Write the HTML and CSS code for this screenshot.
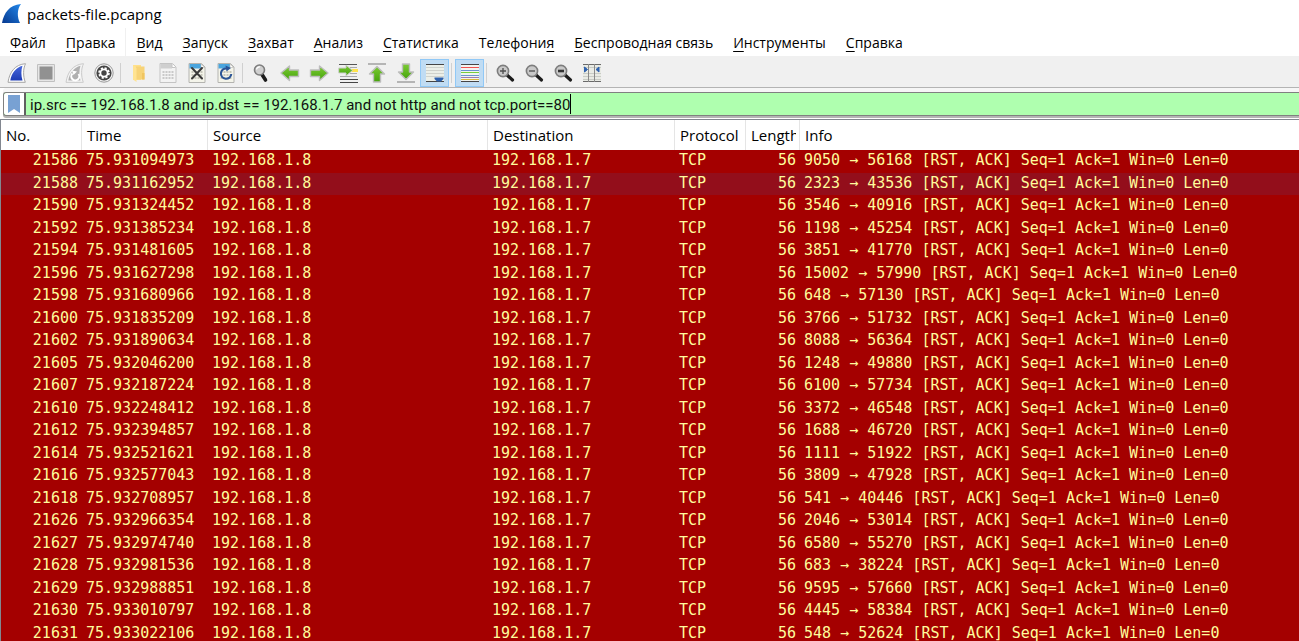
FILE: index.html
```
<!DOCTYPE html>
<html lang="ru">
<head>
<meta charset="utf-8">
<title>packets-file.pcapng</title>
<link rel="stylesheet" href="styles.css">
</head>
<body>
<svg class="defs" aria-hidden="true">
  <defs>
    <linearGradient id="fin" x1="0" y1="1" x2="1" y2="0"><stop offset="0" stop-color="#06388f"/><stop offset="1" stop-color="#2388ea"/></linearGradient>
    <linearGradient id="blue" x1="0" y1="0" x2="0" y2="1"><stop offset="0" stop-color="#4768dc"/><stop offset="1" stop-color="#1d3bb4"/></linearGradient>
    <linearGradient id="green" x1="0" y1="0" x2="0" y2="1"><stop offset="0" stop-color="#7ccb35"/><stop offset="1" stop-color="#45a30b"/></linearGradient>
    <symbol id="lens" viewBox="0 0 20 20"><path d="M11.500 11.500L17.500 17" stroke="#1c1c1c" stroke-width="3.200" stroke-linecap="round"/><circle cx="8" cy="8" r="5.600" fill="#c9c9c9" stroke="#7d7d7d" stroke-width="1.600"/></symbol>
    <symbol id="sheet" viewBox="0 0 20 20"><path d="M2 .5H14.500L18 4V19.500H2Z" fill="#f4f4ea" stroke="#b4b4b0"/><path d="M2.500 1H14V5.500H2.500Z" fill="#4aa5de"/><path d="M14 1V4.500H17.500Z" fill="#fff" stroke="#b4b4b0" stroke-width=".6"/><path d="M4.500 9H16M4.500 12H16M4.500 15H16" stroke="#c6c6ba" stroke-width="2" stroke-dasharray="2 1"/></symbol>
  </defs>
</svg>
<header class="titlebar">
  <svg class="logo" viewBox="0 0 20 20" aria-hidden="true"><path d="M0 19C2 9 7 1 19 0C15 5 15 13 18 19Z" fill="url(#fin)"/></svg>
  <span>packets-file.pcapng</span>
</header>
<nav class="menubar">
  <button><u>Ф</u>айл</button><button class="divided"><u>П</u>равка</button><button><u>В</u>ид</button><button><u>З</u>апуск</button><button><u>З</u>ахват</button><button><u>А</u>нализ</button><button><u>С</u>татистика</button><button>Телефони<u>я</u></button><button><u>Б</u>еспроводная связь</button><button><u>И</u>нструменты</button><button><u>С</u>правка</button>
</nav>
<div class="toolbar">
  <button aria-label="Start capture"><svg viewBox="0 0 20 20"><path d="M1 19.300C2.500 9 8 1.500 18.500.7C16 6 16 13 18.300 19.300Z" fill="#fff" stroke="#a5a5a5"/><path d="M3.300 17.500C4.500 10 9 4.500 15.500 2.800C14 7 14 13 15.500 17.500Z" fill="url(#blue)"/></svg></button>
  <button aria-label="Stop capture"><svg viewBox="0 0 20 20"><path d="M1.500 1.500H18.500V18.500H1.500Z" fill="#e6e6e6" stroke="#c0c0c0"/><path d="M3.500 3.500H16.500V16.500H3.500Z" fill="#919191"/></svg></button>
  <button aria-label="Restart capture"><svg viewBox="0 0 20 20"><path d="M1 19.300C2.500 9 8 1.500 18.500.7C16 6 16 13 18.300 19.300Z" fill="#f4f4f4" stroke="#cacaca"/><path d="M3.300 17.500C4.500 10 9 4.500 15.500 2.800C14 7 14 13 15.500 17.500Z" fill="#b0b0b0"/><path d="M7.500 10.500A4 4 0 1 0 13.500 11" fill="none" stroke="#fff" stroke-width="2"/><path d="M7 7.500L12 8.500L8.500 12Z" fill="#fff"/></svg></button>
  <button aria-label="Capture options"><svg viewBox="0 0 20 20"><circle cx="10" cy="10" r="9.200" fill="#f2f2f2" stroke="#9a9a9a"/><circle cx="10" cy="10" r="7.600" fill="#444"/><circle cx="10" cy="10" r="5" fill="none" stroke="#fff" stroke-width="1.600" stroke-dasharray="2.200 1.727"/><circle cx="10" cy="10" r="3.600" fill="none" stroke="#fff" stroke-width="1.800"/></svg></button>
  <span class="separator"></span>
  <button aria-label="Open"><svg viewBox="0 0 20 20"><path d="M4 2H12V17H4Z" fill="#ffe08a"/><path d="M7 3.500H15.500V16.500H7Z" fill="#f7d377"/><path d="M13 10H15.500V16.500H13Z" fill="#f0c560"/><path d="M4 2L7.500 5V19L4 16.500Z" fill="#ffe391"/></svg></button>
  <button aria-label="Save"><svg viewBox="0 0 20 20"><path d="M2 .5H14.500L18 4V19.500H2Z" fill="#f3f3f3" stroke="#c4c4c4"/><path d="M2.500 1H14V5.500H2.500Z" fill="#cfcfcf"/><path d="M14 1V4.500H17.500" fill="#fff" stroke="#c4c4c4"/><path d="M4.500 9H16M4.500 12H16M4.500 15H16" stroke="#c9c9c9" stroke-width="2" stroke-dasharray="2 1"/></svg></button>
  <button aria-label="Close file"><svg viewBox="0 0 20 20"><use href="#sheet"/><path d="M5 5L15 15.500M15 5L5 15.500" stroke="#3a3a3a" stroke-width="2" stroke-linecap="round"/></svg></button>
  <button aria-label="Reload"><svg viewBox="0 0 20 20"><use href="#sheet"/><path d="M11 5.500A5.200 5.200 0 1 0 15.300 11" fill="none" stroke="#2a5496" stroke-width="2"/><path d="M9.500 2.500L15 5L10.500 8.500Z" fill="#2a5496"/></svg></button>
  <span class="separator"></span>
  <button aria-label="Find"><svg viewBox="0 0 20 20"><path d="M11 11.500L14.500 17" stroke="#1c1c1c" stroke-width="3.600" stroke-linecap="round"/><circle cx="8.500" cy="7" r="5" fill="#cfcfcf" stroke="#7d7d7d" stroke-width="1.600"/><path d="M5.500 6.500A3 3 0 0 1 9 4" fill="none" stroke="#fff" stroke-width="1.200"/></svg></button>
  <button aria-label="Previous"><svg viewBox="0 0 20 20"><path d="M1 10L9.500 3V7H18.500V13.500H9.500V17.500Z" fill="url(#green)" stroke="#bdbdbd" stroke-width="1.400" stroke-linejoin="round"/></svg></button>
  <button aria-label="Next"><svg viewBox="0 0 20 20"><path d="M19 10L10.500 3V7H1.500V13.500H10.500V17.500Z" fill="url(#green)" stroke="#bdbdbd" stroke-width="1.400" stroke-linejoin="round"/></svg></button>
  <button aria-label="Go to packet"><svg viewBox="0 0 20 20"><path d="M1 1.500H19" stroke="#555"/><path d="M12 4.500H19M12 10.500H19M2 13.500H19" stroke="#aaa"/><path d="M13 7.500H20" stroke="#ffe34d" stroke-width="3"/><path d="M2 16.500H20M2 19.500H20" stroke="#454545"/><path d="M14.500 7.500L8 2V5H.7V10H8V13Z" fill="url(#green)" stroke="#cfcfcf" stroke-linejoin="round"/></svg></button>
  <button aria-label="First packet"><svg viewBox="0 0 20 20"><path d="M1 1H19" stroke="#b5b5b5" stroke-width="2"/><path d="M10 3.500L17.500 11H13.500V19H6.500V11H2.500Z" fill="url(#green)" stroke="#bdbdbd" stroke-width="1.400" stroke-linejoin="round"/></svg></button>
  <button aria-label="Last packet"><svg viewBox="0 0 20 20"><path d="M1 19H19" stroke="#b5b5b5" stroke-width="2"/><path d="M10 16.500L17.500 9H13.500V1H6.500V9H2.500Z" fill="url(#green)" stroke="#bdbdbd" stroke-width="1.400" stroke-linejoin="round"/></svg></button>
  <button class="checked" aria-label="Auto scroll" aria-pressed="true"><svg viewBox="0 0 20 20"><path d="M1 1H19V19H1Z" fill="#ecefe8"/><path d="M1 4.500H19M1 7.500H19M1 10.500H19M1 13.500H19" stroke="#d0d2cc"/><path d="M1 1.500H19M1 18.500H19" stroke="#454545"/><path d="M9.500 14.500H18.500V16L16 18.500H12L9.500 16Z" fill="#2f62ae"/></svg></button>
  <span class="separator"></span>
  <button class="checked" aria-label="Colorize" aria-pressed="true"><svg viewBox="0 0 20 20"><path d="M1 1H19V19H1Z" fill="#f2f4ef"/><path d="M1 1.500H19M1 18.500H19" stroke="#454545"/><path d="M1 4.500H19" stroke="#ef5350"/><path d="M1 7.500H19" stroke="#6b96cc"/><path d="M1 9.500H19" stroke="#77cf3c"/><path d="M1 12.500H19" stroke="#6b96cc"/><path d="M1 14.500H19" stroke="#9d7db3"/><path d="M1 16.500H19" stroke="#d9b53b"/></svg></button>
  <span class="separator"></span>
  <button aria-label="Zoom in"><svg viewBox="0 0 20 20"><use href="#lens"/><path d="M5 8H11M8 5V11" stroke="#4d4d4d" stroke-width="1.300"/></svg></button>
  <button aria-label="Zoom out"><svg viewBox="0 0 20 20"><use href="#lens"/><path d="M5 8H11" stroke="#4d4d4d" stroke-width="1.300"/></svg></button>
  <button aria-label="Normal size"><svg viewBox="0 0 20 20"><use href="#lens"/><path d="M5 8H11" stroke="#333" stroke-width="2.600"/></svg></button>
  <button aria-label="Resize columns"><svg viewBox="0 0 20 20"><path d="M1 1H19V19H1Z" fill="#e9ebe5"/><path d="M1 4.500H19M1 10.500H19M1 13.500H19M1 16.500H19" stroke="#c9ccc6"/><path d="M1 1.500H19M1 18.500H19" stroke="#6a6a6a"/><path d="M6.500 1V19M12.500 1V19" stroke="#8a8a8a"/><path d="M2.500 4L5.500 6.500L2.500 9ZM17 4L14 6.500L17 9Z" fill="#2f62ae" stroke="#2f62ae"/></svg></button>
</div>
<div class="filterbar">
  <button class="bookmark" aria-label="Bookmarks"><svg viewBox="0 0 12 18"><path d="M0 0H12V18L6 14L0 18Z" fill="#78a1d3"/></svg></button>
  <input class="expression" aria-label="Display filter" value="ip.src == 192.168.1.8 and ip.dst == 192.168.1.7 and not http and not tcp.port==80">
  <span class="caret"></span>
</div>
<main class="pane">
<table class="packets">
<colgroup><col class="no"><col class="time"><col class="source"><col class="destination"><col class="protocol"><col class="length"><col></colgroup>
<thead><tr><th>No.</th><th>Time</th><th>Source</th><th>Destination</th><th>Protocol</th><th><div class="clip">Length</div></th><th>Info</th></tr></thead>
<tbody>
<tr><td>21586</td><td>75.931094973</td><td>192.168.1.8</td><td>192.168.1.7</td><td>TCP</td><td>56</td><td>9050 → 56168 [RST, ACK] Seq=1 Ack=1 Win=0 Len=0</td></tr>
<tr class="hover"><td>21588</td><td>75.931162952</td><td>192.168.1.8</td><td>192.168.1.7</td><td>TCP</td><td>56</td><td>2323 → 43536 [RST, ACK] Seq=1 Ack=1 Win=0 Len=0</td></tr>
<tr><td>21590</td><td>75.931324452</td><td>192.168.1.8</td><td>192.168.1.7</td><td>TCP</td><td>56</td><td>3546 → 40916 [RST, ACK] Seq=1 Ack=1 Win=0 Len=0</td></tr>
<tr><td>21592</td><td>75.931385234</td><td>192.168.1.8</td><td>192.168.1.7</td><td>TCP</td><td>56</td><td>1198 → 45254 [RST, ACK] Seq=1 Ack=1 Win=0 Len=0</td></tr>
<tr><td>21594</td><td>75.931481605</td><td>192.168.1.8</td><td>192.168.1.7</td><td>TCP</td><td>56</td><td>3851 → 41770 [RST, ACK] Seq=1 Ack=1 Win=0 Len=0</td></tr>
<tr><td>21596</td><td>75.931627298</td><td>192.168.1.8</td><td>192.168.1.7</td><td>TCP</td><td>56</td><td>15002 → 57990 [RST, ACK] Seq=1 Ack=1 Win=0 Len=0</td></tr>
<tr><td>21598</td><td>75.931680966</td><td>192.168.1.8</td><td>192.168.1.7</td><td>TCP</td><td>56</td><td>648 → 57130 [RST, ACK] Seq=1 Ack=1 Win=0 Len=0</td></tr>
<tr><td>21600</td><td>75.931835209</td><td>192.168.1.8</td><td>192.168.1.7</td><td>TCP</td><td>56</td><td>3766 → 51732 [RST, ACK] Seq=1 Ack=1 Win=0 Len=0</td></tr>
<tr><td>21602</td><td>75.931890634</td><td>192.168.1.8</td><td>192.168.1.7</td><td>TCP</td><td>56</td><td>8088 → 56364 [RST, ACK] Seq=1 Ack=1 Win=0 Len=0</td></tr>
<tr><td>21605</td><td>75.932046200</td><td>192.168.1.8</td><td>192.168.1.7</td><td>TCP</td><td>56</td><td>1248 → 49880 [RST, ACK] Seq=1 Ack=1 Win=0 Len=0</td></tr>
<tr><td>21607</td><td>75.932187224</td><td>192.168.1.8</td><td>192.168.1.7</td><td>TCP</td><td>56</td><td>6100 → 57734 [RST, ACK] Seq=1 Ack=1 Win=0 Len=0</td></tr>
<tr><td>21610</td><td>75.932248412</td><td>192.168.1.8</td><td>192.168.1.7</td><td>TCP</td><td>56</td><td>3372 → 46548 [RST, ACK] Seq=1 Ack=1 Win=0 Len=0</td></tr>
<tr><td>21612</td><td>75.932394857</td><td>192.168.1.8</td><td>192.168.1.7</td><td>TCP</td><td>56</td><td>1688 → 46720 [RST, ACK] Seq=1 Ack=1 Win=0 Len=0</td></tr>
<tr><td>21614</td><td>75.932521621</td><td>192.168.1.8</td><td>192.168.1.7</td><td>TCP</td><td>56</td><td>1111 → 51922 [RST, ACK] Seq=1 Ack=1 Win=0 Len=0</td></tr>
<tr><td>21616</td><td>75.932577043</td><td>192.168.1.8</td><td>192.168.1.7</td><td>TCP</td><td>56</td><td>3809 → 47928 [RST, ACK] Seq=1 Ack=1 Win=0 Len=0</td></tr>
<tr><td>21618</td><td>75.932708957</td><td>192.168.1.8</td><td>192.168.1.7</td><td>TCP</td><td>56</td><td>541 → 40446 [RST, ACK] Seq=1 Ack=1 Win=0 Len=0</td></tr>
<tr><td>21626</td><td>75.932966354</td><td>192.168.1.8</td><td>192.168.1.7</td><td>TCP</td><td>56</td><td>2046 → 53014 [RST, ACK] Seq=1 Ack=1 Win=0 Len=0</td></tr>
<tr><td>21627</td><td>75.932974740</td><td>192.168.1.8</td><td>192.168.1.7</td><td>TCP</td><td>56</td><td>6580 → 55270 [RST, ACK] Seq=1 Ack=1 Win=0 Len=0</td></tr>
<tr><td>21628</td><td>75.932981536</td><td>192.168.1.8</td><td>192.168.1.7</td><td>TCP</td><td>56</td><td>683 → 38224 [RST, ACK] Seq=1 Ack=1 Win=0 Len=0</td></tr>
<tr><td>21629</td><td>75.932988851</td><td>192.168.1.8</td><td>192.168.1.7</td><td>TCP</td><td>56</td><td>9595 → 57660 [RST, ACK] Seq=1 Ack=1 Win=0 Len=0</td></tr>
<tr><td>21630</td><td>75.933010797</td><td>192.168.1.8</td><td>192.168.1.7</td><td>TCP</td><td>56</td><td>4445 → 58384 [RST, ACK] Seq=1 Ack=1 Win=0 Len=0</td></tr>
<tr><td>21631</td><td>75.933022106</td><td>192.168.1.8</td><td>192.168.1.7</td><td>TCP</td><td>56</td><td>548 → 52624 [RST, ACK] Seq=1 Ack=1 Win=0 Len=0</td></tr>
</tbody>
</table>
</main>
</body>
</html>
```
FILE: styles.css
```
* { box-sizing: border-box; }
body {
  margin: 0;
  height: 100vh;
  display: flex;
  flex-direction: column;
  overflow: hidden;
  background: #fff;
  color: #000;
  font: 15px "Open Sans", sans-serif;
}
button {
  font: inherit;
  color: inherit;
  border: 0;
  background: none;
  padding: 0;
}
.defs { position: absolute; width: 0; height: 0; }
.titlebar {
  display: flex;
  flex: none;
  align-items: center;
  gap: 5px;
  height: 28px;
  padding: 0 2px;
}
.logo { width: 20px; height: 20px; }
.menubar {
  display: flex;
  flex: none;
  height: 28px;
  font-size: 14px;
}
.menubar button { padding: 1px 10px 0; white-space: nowrap; }
.menubar .divided { border-right: 1px solid #f0f0f0; }
.menubar u { text-underline-offset: 3px; }
.toolbar {
  display: flex;
  flex: none;
  align-items: center;
  height: 32px;
  padding: 2px 2px 0;
  background: #f0f0f0;
  border-bottom: 1px solid #b4b4b4;
}
.toolbar button {
  display: grid;
  place-items: center;
  width: 29px;
  height: 28px;
}
.toolbar svg { width: 20px; height: 20px; }
.toolbar .checked { background: #c0dcf3; border: 1px solid #90c8f6; }
.separator { width: 1px; height: 20px; margin: 0 3px 0 2px; background: #d0d0d0; }
.filterbar {
  display: flex;
  flex: none;
  height: 24px;
  margin: 4px 0 0 3px;
  background: #afffaf;
  border: 1px solid #808080;
  border-right: 0;
  border-radius: 3px 0 0 3px;
  box-shadow: 0 -4px 0 #f6f6f6, 0 2px 0 #b4b4b4;
}
.bookmark {
  display: grid;
  place-items: center;
  width: 22px;
  background: #fff;
  border-right: 2px solid #606060;
  border-radius: 3px 0 0 3px;
}
.bookmark svg { width: 12px; height: 18px; }
.expression {
  field-sizing: content;
  min-width: 0;
  padding: 2px 0 0 4px;
  border: 0;
  outline: 0;
  background: none;
  color: #111;
  font: 15px Roboto, sans-serif;
}
.caret { width: 1px; height: 20px; margin-top: 1px; background: #000; }
.pane {
  flex: 1;
  min-height: 0;
  margin-top: 3px;
  overflow: hidden;
  border-top: 1px solid #828790;
  border-left: 1px solid #828790;
}
.packets {
  width: 100%;
  table-layout: fixed;
  border-collapse: separate;
  border-spacing: 0;
}
.no { width: 81px; }
.time { width: 126px; }
.source { width: 280px; }
.destination { width: 187px; }
.protocol { width: 71px; }
.length { width: 54px; }
.packets th {
  height: 30px;
  padding: 0 3px 0 5px;
  border-right: 1px solid #e5e5e5;
  font-weight: 400;
  text-align: left;
}
.packets th:last-child { border-right: 0; }
.clip { overflow: hidden; }
.packets tbody {
  background: #a40000;
  color: #fffc9c;
  font: 15px/18px "DejaVu Sans Mono", monospace;
}
.packets td { height: 22px; padding: 0 4px 2px; white-space: nowrap; }
.packets tr:nth-child(odd) td { height: 23px; padding-bottom: 3px; }
.packets td:nth-child(1), .packets td:nth-child(6) { text-align: right; }
.packets .hover { background: #930e1b; }
```
